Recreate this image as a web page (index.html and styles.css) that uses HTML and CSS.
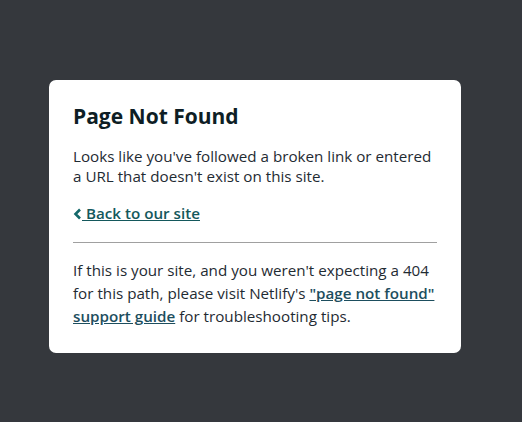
FILE: index.html
```
<!DOCTYPE html>
<html>
<head>
<meta charset="utf-8">
<link rel="stylesheet" href="styles.css">
</head>
<body>
<div class="wrap">
  <main class="card">
    <h1 class="title">Page Not Found</h1>
    <p class="text">Looks like you've followed a broken link or entered a URL that doesn't exist on this site.</p>
    <p class="back"><a class="back-link" href="#"><svg class="chev" width="9" height="12" viewBox="0 0 9 12"><path d="M7 1.5 L2.5 6 L7 10.5" fill="none" stroke="currentColor" stroke-width="2.6"/></svg> Back to our site</a></p>
    <hr class="rule">
    <p class="note">If this is your site, and you weren't expecting a 404 for this path, please visit Netlify's <a class="guide" href="#">"page not found" support guide</a> for troubleshooting tips.</p>
  </main>
</div>
</body>
</html>
```
FILE: styles.css
```
html, body { margin: 0; padding: 0; }
body {
  background: #35383d;
  font-family: "Segoe UI", "Open Sans", "Noto Sans", sans-serif;
  color: #1f2b33;
}
.wrap {
  height: 422px;
  display: flex;
  align-items: center;
  justify-content: center;
  padding: 10px 12px 0 0;
  box-sizing: border-box;
}
.card {
  width: 412px;
  box-sizing: border-box;
  background: #fff;
  border-radius: 7px;
  padding: 23px 24px 25px;
}
.title {
  margin: 0 0 17px;
  font-size: 21px;
  font-weight: 700;
  line-height: 26px;
  color: #0e1e25;
}
.text {
  margin: 0;
  font-size: 15.2px;
  line-height: 20px;
}
.back {
  margin: 17px 0 0;
  font-size: 15.2px;
  line-height: 20px;
}
.back-link {
  color: #14585c;
  font-weight: 600;
  text-decoration: underline;
}
.chev { color: #14686a; vertical-align: -1px; }
.rule {
  border: 0;
  border-top: 1px solid #a0a0a0;
  margin: 19px 0 16px;
}
.note {
  margin: 0;
  font-size: 15.2px;
  line-height: 23px;
}
.guide {
  color: #1d4e5e;
  font-weight: 600;
  text-decoration: underline;
}
```
